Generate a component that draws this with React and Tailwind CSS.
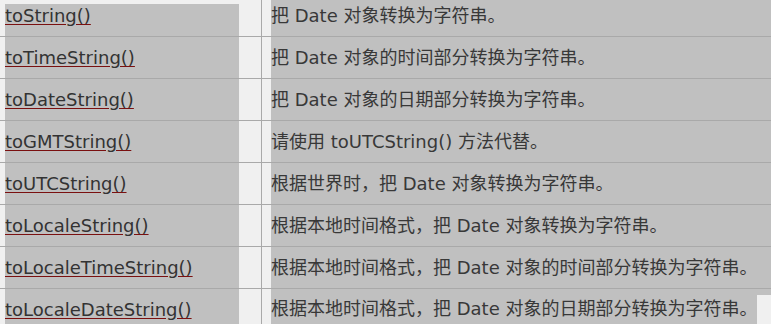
const rows = [
  ["toString()", "把 Date 对象转换为字符串。"],
  ["toTimeString()", "把 Date 对象的时间部分转换为字符串。"],
  ["toDateString()", "把 Date 对象的日期部分转换为字符串。"],
  ["toGMTString()", "请使用 toUTCString() 方法代替。"],
  ["toUTCString()", "根据世界时，把 Date 对象转换为字符串。"],
  ["toLocaleString()", "根据本地时间格式，把 Date 对象转换为字符串。"],
  ["toLocaleTimeString()", "根据本地时间格式，把 Date 对象的时间部分转换为字符串。"],
  ["toLocaleDateString()", "根据本地时间格式，把 Date 对象的日期部分转换为字符串。"],
];

function MethodLink({ name }) {
  return (
    <a href="#" className="text-[#333] underline decoration-[#7a1010] underline-offset-[2px]">
      {name}
    </a>
  );
}

export default function App() {
  const last = rows.length - 1;
  return (
    <div
      className="w-[771px] h-[324px] overflow-hidden bg-[#f0f0f0] text-[18px] text-[#383838]"
      style={{ fontFamily: '"DejaVu Sans", "Noto Sans CJK SC", sans-serif' }}
    >
      <div className="-mt-[5px] flex flex-col">
        {rows.map(([name, desc], i) => (
          <div key={name} className="flex h-[42px] border-b border-[#a9a9a9]">
            {/* method column */}
            <div className="w-[262px] shrink-0 border-r border-[#a9a9a9] pl-[5px] flex">
              <div
                className={`w-[234px] bg-[#c0c0c0] flex items-center ${
                  i === 0 ? "mt-[9px] pb-[9px]" : ""
                }`}
              >
                <MethodLink name={name} />
              </div>
            </div>
            {/* description column */}
            <div className="flex-1 pl-[9px] flex flex-col whitespace-nowrap">
              {i === last ? (
                <>
                  <div className="h-[8px] bg-[#c0c0c0]" />
                  <div className="w-[486px] flex-1 bg-[#c0c0c0] flex items-center pb-[8px]">
                    {desc}
                  </div>
                </>
              ) : (
                <div className="flex-1 bg-[#c0c0c0] flex items-center">{desc}</div>
              )}
            </div>
          </div>
        ))}
      </div>
    </div>
  );
}
